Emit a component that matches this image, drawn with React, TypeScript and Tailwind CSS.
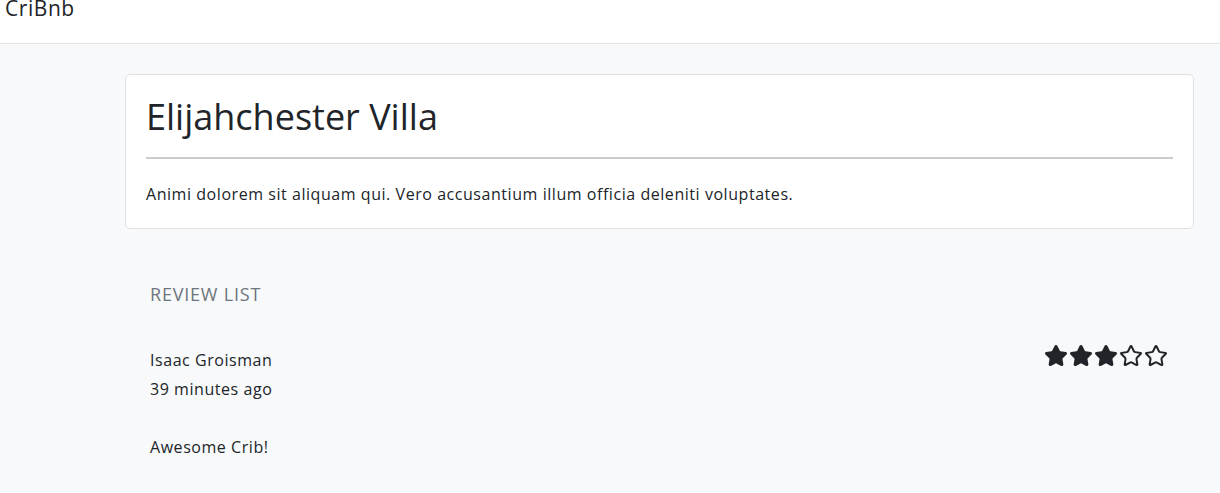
import { Star } from "lucide-react";

const review = {
    author: "Isaac Groisman",
    time: "39 minutes ago",
    rating: 3,
    body: "Awesome Crib!",
};

function Stars({ rating }: { rating: number }) {
    return (
        <div className="flex items-center gap-[1px]">
            {[1, 2, 3, 4, 5].map((i) => (
                <Star
                    key={i}
                    className="size-[24px] text-[#212529]"
                    strokeWidth={2}
                    fill={i <= rating ? "#212529" : "none"}
                />
            ))}
        </div>
    );
}

export default function App() {
    return (
        <div className="min-h-[493px] bg-[#f8f9fa] text-[#212529] tracking-[0.55px]" style={{ fontFamily: '"Open Sans", sans-serif' }}>
            <nav className="flex items-start h-[44px] bg-white border-b border-[#e3e3e3] px-[5px] overflow-hidden">
                <span className="-mt-[6px] text-[21px] leading-[28px]">CriBnb</span>
            </nav>

            <main className="pl-[125px] pr-[26px] pt-[30px]">
                <div className="bg-white border border-[#dfe1e3] rounded-[5px] px-[20px] pt-[20px] pb-[22px]">
                    <h1 className="text-[36px] leading-[44px] font-normal tracking-normal">Elijahchester Villa</h1>
                    <hr className="mt-[18px] border-t-2 border-[#cccccc]" />
                    <p className="mt-[23px] text-[16px] leading-[24px]">
                        Animi dolorem sit aliquam qui. Vero accusantium illum officia deleniti voluptates.
                    </p>
                </div>

                <section className="px-[25px] pt-[53px]">
                    <h2 className="text-[18px] leading-[24px] text-[#6c757d] uppercase tracking-[0.8px]">Review List</h2>
                    <div className="mt-[40px] flex justify-between items-start">
                        <div className="text-[16px] leading-[29px]">
                            <div>{review.author}</div>
                            <div>{review.time}</div>
                            <p className="mt-[29px]">{review.body}</p>
                        </div>
                        <div className="-mt-[2px] pr-[1px]">
                            <Stars rating={review.rating} />
                        </div>
                    </div>
                </section>
            </main>
        </div>
    );
}
